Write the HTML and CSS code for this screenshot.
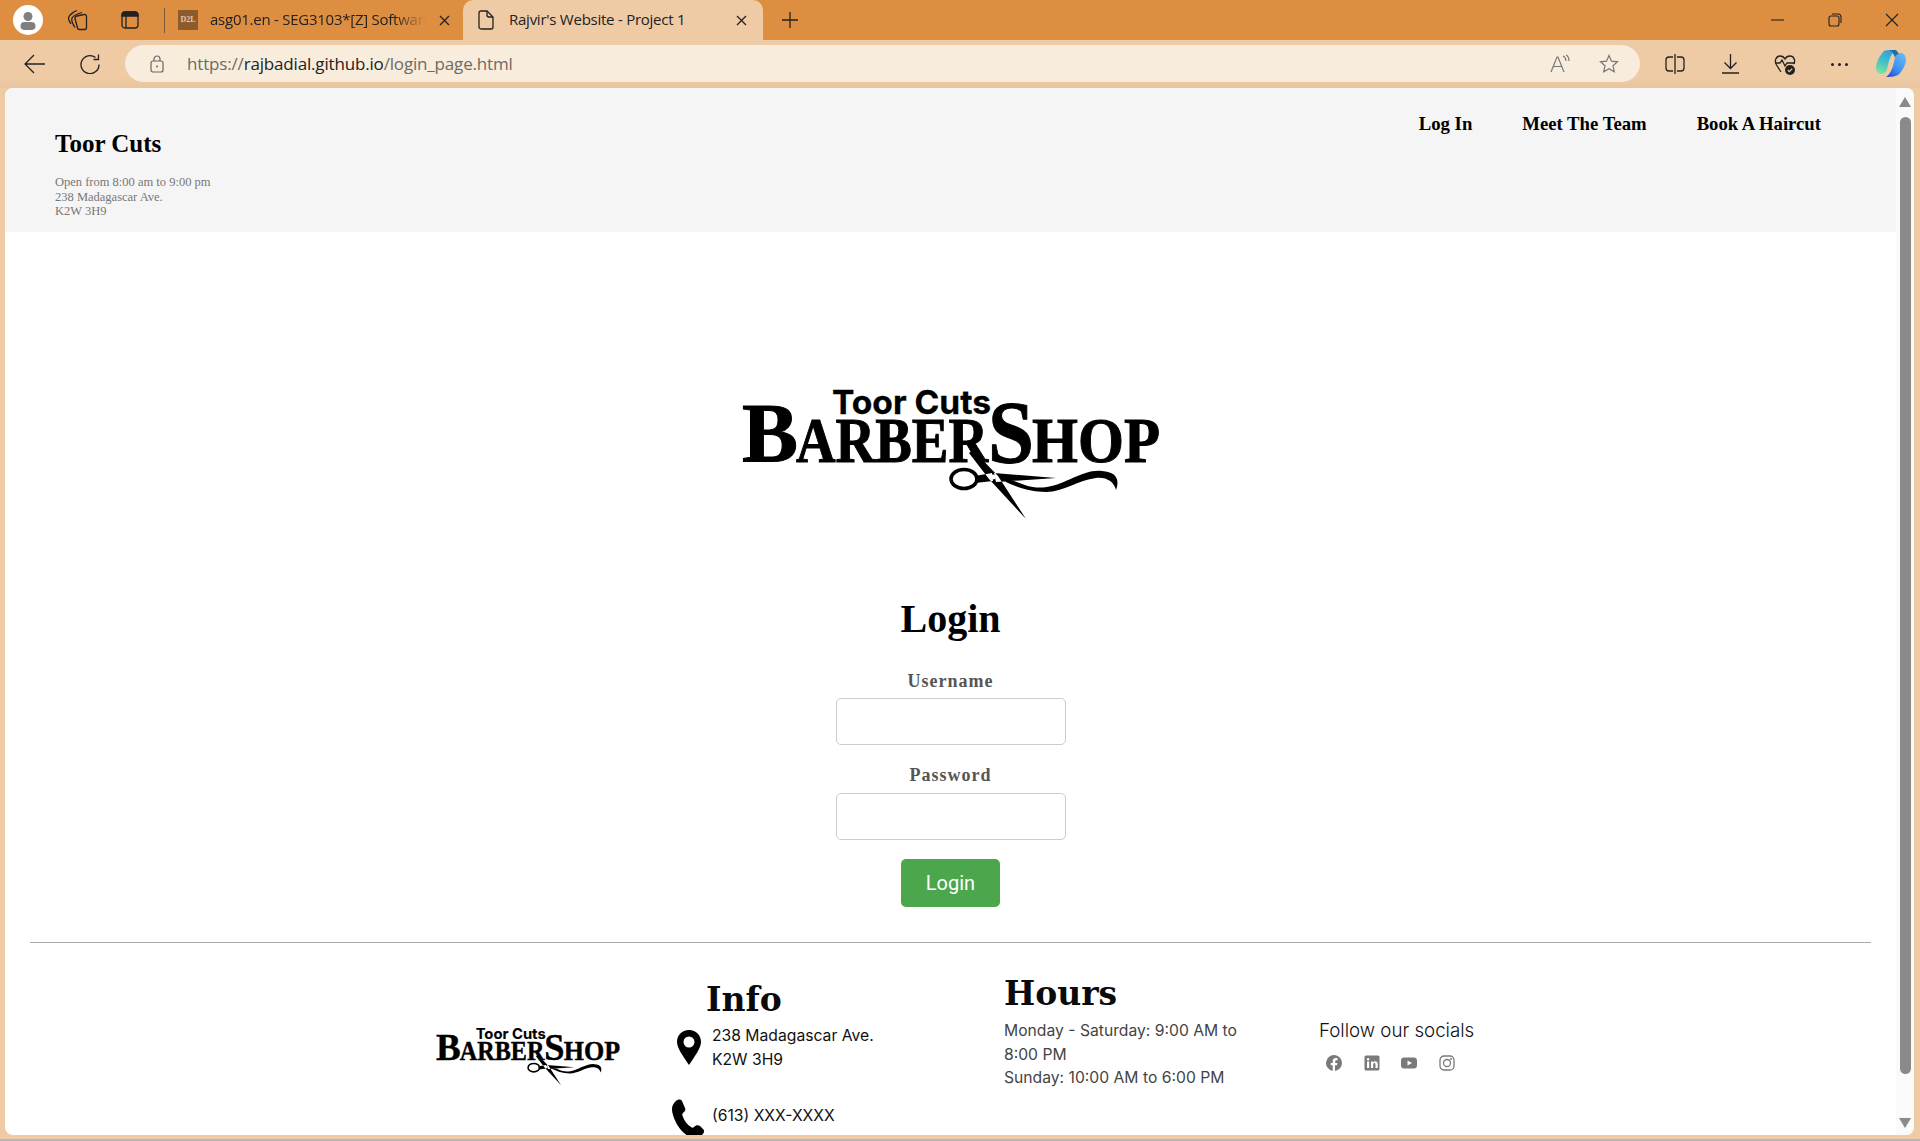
FILE: index.html
```html
<!DOCTYPE html>
<html lang="en">
<head>
<meta charset="utf-8">
<title>Rajvir's Website - Project 1</title>
<link rel="stylesheet" href="styles.css">
</head>
<body>
<div class="browser">
  <div class="tabstrip">
    <div class="profile"><svg viewBox="0 0 30 30"><circle cx="15" cy="15" r="15" fill="#fff"/><circle cx="15" cy="11.500" r="4.500" fill="#808080"/><rect x="7.500" y="17" width="15" height="8" rx="4" fill="#808080"/></svg></div>
    <svg class="strip-ico collections" viewBox="0 0 22 24"><path d="M11 8l7-1.500a2 2 0 0 1 2.500 2v11a2 2 0 0 1-2 2h-5a2 2 0 0 1-2-1.500L9 10.500A2 2 0 0 1 11 8z"/><path d="M5 16c-2-3-3-6-2-7.500 1-2 5-5 8-6"/><path d="M9 19.500c-2-3-4-7-3-9.500 1-2 5-4 10-5.500"/></svg>
    <svg class="strip-ico layout" viewBox="0 0 18 18"><rect x="1" y="1" width="16" height="16" rx="3"/><path d="M1 5h16V4a3 3 0 0 0-3-3H4a3 3 0 0 0-3 3z" fill="#222"/><path d="M5 5v12"/></svg>
    <div class="strip-sep"></div>
    <div class="tab">
      <div class="favicon">D2L</div>
      <span class="tab-title tab-fade">asg01.en - SEG3103*[Z] Software</span>
      <svg class="tab-close" viewBox="0 0 11 11"><path d="M1 1l9 9M10 1l-9 9"/></svg>
    </div>
    <div class="tab tab-active">
      <svg class="page-ico" viewBox="0 0 16 20"><path d="M1 3a2 2 0 0 1 2-2h6l6 6v10a2 2 0 0 1-2 2H3a2 2 0 0 1-2-2z"/><path d="M9 1v4a2 2 0 0 0 2 2h4"/></svg>
      <span class="tab-title">Rajvir's Website - Project 1</span>
      <svg class="tab-close" viewBox="0 0 11 11"><path d="M1 1l9 9M10 1l-9 9"/></svg>
    </div>
    <svg class="new-tab" viewBox="0 0 16 16"><path d="M8 0v16M0 8h16"/></svg>
    <div class="window-controls">
      <svg viewBox="0 0 14 14"><path d="M0 7h13"/></svg>
      <svg viewBox="0 0 14 14"><rect x="1" y="3" width="10" height="10" rx="2"/><path d="M4 1h6a3 3 0 0 1 3 3v6"/></svg>
      <svg viewBox="0 0 14 14"><path d="M1 1l12 12M13 1L1 13"/></svg>
    </div>
  </div>
  <div class="toolbar">
    <svg class="tool back" viewBox="0 0 21 20"><path d="M10 1l-9 9 9 9M1 10h20"/></svg>
    <svg class="tool reload" viewBox="0 0 20 20"><path d="M19 10.500A9 9 0 1 1 15.500 3.500"/><path d="M18.500 0.500v5h-5"/></svg>
    <div class="addressbar">
      <svg class="lock" viewBox="0 0 14 18"><rect x="1" y="6" width="12" height="11" rx="2"/><path d="M4 6V4a3 3 0 0 1 6 0v2"/><circle cx="7" cy="11.500" r="1" fill="#666" stroke="none"/></svg>
      <span class="url">https://<b>rajbadial.github.io</b>/login_page.html</span>
      <svg class="addr-ico read" viewBox="0 0 20 20"><path d="M1 18L7 3h1l6 15M3.500 12.500h8"/><path d="M13 2c2 1 3 3 3 5M16 1c2 1 3 4 3 6"/></svg>
      <svg class="addr-ico star" viewBox="0 0 20 20"><path d="M10 1.500l2.500 5.700 6 .6-4.500 4 1.300 6L10 14.700l-5.300 3.100 1.300-6-4.500-4 6-.6z"/></svg>
    </div>
    <svg class="tool split" viewBox="0 0 20 20"><path d="M8 3H4a3 3 0 0 0-3 3v8a3 3 0 0 0 3 3h4M12 3h4a3 3 0 0 1 3 3v8a3 3 0 0 1-3 3h-4M10 0v20"/></svg>
    <svg class="tool download" viewBox="0 0 17 20"><path d="M8.500 0v14M2.500 8.500l6 6 6-6M0 19h17"/></svg>
    <svg class="tool heart" viewBox="0 0 22 22"><path d="M7 19L2.500 12C0 8 2 3 6 3c2 0 4 1 5 3 1-2 3-3 5-3 4 0 6 5 3.500 8"/><path d="M1 10h5l2-3 3 6 2-3h8"/><circle cx="16" cy="17" r="5" fill="#222" stroke="none"/><path d="M13.800 17l1.600 1.600 2.800-3" stroke="#eecaa5"/></svg>
    <div class="more"><i></i><i></i><i></i></div>
    <svg class="copilot" viewBox="0 0 30 30">
      <defs>
        <linearGradient id="cpA" x1="0.600" y1="0" x2="0.300" y2="1"><stop offset="0" stop-color="#2f9fe0"/><stop offset="0.500" stop-color="#45c0c8"/><stop offset="1" stop-color="#7fe39a"/></linearGradient>
        <linearGradient id="cpB" x1="0.800" y1="0.100" x2="0.200" y2="1"><stop offset="0" stop-color="#5cb8f8"/><stop offset="0.600" stop-color="#3f8cf0"/><stop offset="1" stop-color="#2a4fd0"/></linearGradient>
      </defs>
      <path d="M8 2c2-1 5-1 12-1-3 2-5 5-7 11l-2 8c-1 4-3 5-6 5s-5-3-5-7c0-4 4-12 8-16z" fill="url(#cpA)"/>
      <path d="M22 26c-2 1-5 2-12 2 3-2 5-5 7-11l2-8c1-4 3-5 6-5s5 3 5 7c0 4-4 12-8 15z" fill="url(#cpB)"/>
      <path d="M13 1h6c1 0 2 .5 2.500 2L23 5c-2 0-3.500 1-4 4-1-4-3-7-6-8z" fill="#1d6fa5"/>
    </svg>
  </div>
  <div class="viewport">
    <div class="page">
      <header class="site-header">
        <div class="brand">
          <h1>Toor Cuts</h1>
          <p>Open from 8:00 am to 9:00 pm<br>238 Madagascar Ave.<br>K2W 3H9</p>
        </div>
        <nav class="site-nav">
          <a>Log In</a>
          <a>Meet The Team</a>
          <a>Book A Haircut</a>
        </nav>
      </header>
      <main class="login">
        <svg class="logo logo-large" viewBox="0 0 420 135">
          <text class="logo-top" x="90" y="29" textLength="159" lengthAdjust="spacingAndGlyphs">Toor Cuts</text>
          <text class="logo-cap" x="0" y="77">B</text>
          <text class="logo-small" x="54" y="77" textLength="192" lengthAdjust="spacingAndGlyphs">ARBER</text>
          <text class="logo-big" x="246" y="77" textLength="46" lengthAdjust="spacingAndGlyphs">S</text>
          <text class="logo-small" x="290" y="77" textLength="128" lengthAdjust="spacingAndGlyphs">HOP</text>
          <ellipse cx="222" cy="94" rx="13" ry="9.500" fill="none" stroke="#000" stroke-width="3.500"/>
          <path d="M233 91l17-3 1 8-18 2zM252 88l62 5-60 4zM247 94l37 40-28-43-25-26-4 3zM262 93c15 3 24 12 43 9 20-3 36-18 55-16 14 1 18 8 14 19-2-8-9-13-20-12-18 2-32 14-50 14-17 0-30-5-42-11z"/>
          <circle cx="251" cy="92" r="2.500" fill="#fff"/>
        </svg>
        <h2>Login</h2>
        <label class="field-label first-label" for="username">Username</label>
        <input class="field" id="username" type="text">
        <label class="field-label" for="password">Password</label>
        <input class="field" id="password" type="password">
        <button class="submit" type="button">Login</button>
      </main>
      <hr class="rule">
      <footer class="site-footer">
        <svg class="logo logo-small-size" viewBox="0 0 420 135">
          <text class="logo-top" x="90" y="29" textLength="159" lengthAdjust="spacingAndGlyphs">Toor Cuts</text>
          <text class="logo-cap" x="0" y="77">B</text>
          <text class="logo-small" x="54" y="77" textLength="192" lengthAdjust="spacingAndGlyphs">ARBER</text>
          <text class="logo-big" x="246" y="77" textLength="46" lengthAdjust="spacingAndGlyphs">S</text>
          <text class="logo-small" x="290" y="77" textLength="128" lengthAdjust="spacingAndGlyphs">HOP</text>
          <ellipse cx="222" cy="94" rx="13" ry="9.500" fill="none" stroke="#000" stroke-width="3.500"/>
          <path d="M233 91l17-3 1 8-18 2zM252 88l62 5-60 4zM247 94l37 40-28-43-25-26-4 3zM262 93c15 3 24 12 43 9 20-3 36-18 55-16 14 1 18 8 14 19-2-8-9-13-20-12-18 2-32 14-50 14-17 0-30-5-42-11z"/>
          <circle cx="251" cy="92" r="2.500" fill="#fff"/>
        </svg>
        <section class="info">
          <h3>Info</h3>
          <div class="info-row">
            <svg class="pin" viewBox="0 0 24 35"><path fill-rule="evenodd" d="M12 0C5 0 0 5 0 12c0 6 6 14 12 23 6-9 12-17 12-23C24 5 19 0 12 0zm0 6.500a5.500 5.500 0 1 1 0 11 5.500 5.500 0 0 1 0-11z"/></svg>
            <p>238 Madagascar Ave.<br>K2W 3H9</p>
          </div>
          <div class="info-row phone-row">
            <svg class="phone" viewBox="0 0 32 40"><path d="M4 2c2-2 5-2 6 0l3 7c1 2 0 3-2 5-1 1-1 2 0 4 2 5 4 7 8 10 1 1 2 1 3 0 2-2 4-2 6-1l3 3c2 2 1 4-1 6-3 3-8 4-12 2C10 34 4 26 1 16-1 10 0 5 4 2z"/></svg>
            <p>(613) XXX-XXXX</p>
          </div>
        </section>
        <section class="hours">
          <h3>Hours</h3>
          <p>Monday - Saturday: 9:00 AM to 8:00 PM<br>Sunday: 10:00 AM to 6:00 PM</p>
        </section>
        <section class="socials">
          <p>Follow our socials</p>
          <div class="social-icons">
            <svg viewBox="0 0 16 16"><path d="M16 8a8 8 0 1 0-9.300 7.900v-5.600h-2V8h2V6.200c0-2 1.200-3.100 3-3.100.9 0 1.800.2 1.800.2v2h-1c-1 0-1.300.6-1.300 1.200V8h2.200l-.4 2.300H9v5.600A8 8 0 0 0 16 8z"/></svg>
            <svg viewBox="0 0 16 16"><path fill-rule="evenodd" d="M2 0.500h12a1.500 1.500 0 0 1 1.500 1.500v12a1.500 1.500 0 0 1-1.500 1.500H2A1.500 1.500 0 0 1 .5 14V2A1.500 1.500 0 0 1 2 .5zM3 6.500v6.500h2.200V6.500zM4.100 3a1.200 1.200 0 1 0 0 2.500 1.200 1.200 0 0 0 0-2.500zM7 6.500V13h2.200V9.500c0-2 2.300-2 2.300 0V13h2.200V9c0-3.300-3.400-3.300-4.500-1.600V6.500z"/></svg>
            <svg viewBox="0 0 16 16"><path fill-rule="evenodd" d="M3 2.500h10c1.700 0 3 1.300 3 3v5c0 1.700-1.300 3-3 3H3c-1.700 0-3-1.300-3-3v-5c0-1.700 1.300-3 3-3zM6.500 5.500v5L11 8z"/></svg>
            <svg class="outline" viewBox="0 0 16 16"><rect x="1" y="1" width="14" height="14" rx="4"/><circle cx="8" cy="8" r="3.500"/><circle cx="12" cy="4" r="1" fill="#7a7a7a" stroke="none"/></svg>
          </div>
        </section>
      </footer>
    </div>
    <div class="scrollbar">
      <div class="arrow-up"></div>
      <div class="thumb"></div>
      <div class="arrow-down"></div>
    </div>
  </div>
  <div class="bottom-edge"></div>
</div>
</body>
</html>
```
FILE: styles.css
```css
* { box-sizing: border-box; }
html, body { margin: 0; height: 100%; overflow: hidden; }
body { font-family: "Liberation Serif", serif; background: #eecaa5; }
.browser { height: 1141px; display: flex; flex-direction: column; }

/* tab strip */
.tabstrip { height: 40px; flex: none; background: #de8e41; display: flex; align-items: center; padding-left: 13px; position: relative; }
.profile { width: 30px; height: 30px; }
.profile svg { width: 30px; height: 30px; display: block; }
.strip-ico { fill: none; stroke: #222; stroke-width: 1.300; }
.collections { width: 22px; height: 24px; margin-left: 23px; }
.layout { width: 18px; height: 18px; margin-left: 33px; }
.strip-sep { width: 1px; height: 25px; background: #7c5a36; margin-left: 25px; }
.tab { height: 40px; display: flex; align-items: center; width: 298px; padding-left: 13px; border-radius: 10px 10px 0 0; flex: none; }
.tab-active { width: 300px; background: #eecaa5; padding-left: 15px; }
.favicon { width: 20px; height: 20px; background: #8d5a2b; color: #e7c9a6; font: bold 8px/20px "Liberation Serif", serif; text-align: center; flex: none; }
.tab-title { font: 15px/20px "Open Sans", sans-serif; color: #222; white-space: nowrap; letter-spacing: -0.250px; overflow: hidden; margin-top: -2px; }
.favicon + .tab-title { margin-left: 12px; width: 216px; }
.tab-fade { -webkit-mask-image: linear-gradient(90deg, #000 85%, transparent); mask-image: linear-gradient(90deg, #000 85%, transparent); }
.tab-close { width: 11px; height: 11px; fill: none; stroke: #222; stroke-width: 1.300; flex: none; margin-left: 13px; }
.tab-active .tab-close { margin-left: 51px; }
.page-ico { width: 16px; height: 20px; fill: none; stroke: #222; stroke-width: 1.300; flex: none; margin-right: 15px; }
.new-tab { width: 16px; height: 16px; fill: none; stroke: #222; stroke-width: 1.300; margin-left: 19px; }
.window-controls { margin-left: auto; display: flex; gap: 43px; padding-right: 21px; align-items: center; }
.window-controls svg { width: 14px; height: 14px; fill: none; stroke: #222; stroke-width: 1.100; }

/* toolbar */
.toolbar { height: 48px; flex: none; display: flex; align-items: center; background: linear-gradient(#eecaa5 80%, #e9c49d); padding-left: 24px; }
.tool { fill: none; stroke: #222; stroke-width: 1.300; flex: none; }
.back { width: 21px; height: 20px; }
.reload { width: 20px; height: 20px; margin-left: 35px; }
.addressbar { width: 1515px; height: 37px; margin-left: 25px; margin-top: -1px; border-radius: 19px; background: #f8ecdd; display: flex; align-items: center; padding-left: 25px; flex: none; }
.lock { width: 14px; height: 18px; fill: none; stroke: #666; stroke-width: 1.200; flex: none; }
.url { font: 17px/24px "Open Sans", sans-serif; color: #6e6a66; margin-left: 23px; letter-spacing: -0.170px; white-space: nowrap; }
.url b { font-weight: 400; color: #222; }
.addr-ico { width: 20px; height: 20px; fill: none; stroke: #777; stroke-width: 1.200; flex: none; }
.read { margin-left: auto; }
.star { margin-left: 29px; margin-right: 21px; }
.split { width: 20px; height: 20px; margin-left: 25px; }
.download { width: 17px; height: 20px; margin-left: 37px; }
.heart { width: 22px; height: 22px; margin-left: 35px; }
.more { display: flex; gap: 4px; margin-left: 35px; width: 16px; flex: none; }
.more i { width: 3px; height: 3px; border-radius: 50%; background: #222; flex: none; }
.copilot { width: 30px; height: 30px; margin-left: 29px; flex: none; }

/* page */
.viewport { height: 1047px; flex: none; margin: 0 6px 0 5px; background: #fff; border-radius: 8px; display: flex; overflow: hidden; }
.page { flex: 1; min-width: 0; overflow: hidden; }
.scrollbar { width: 18px; flex: none; background: #fafafa; display: flex; flex-direction: column; align-items: center; padding-top: 9px; }
.arrow-up { width: 0; height: 0; border: 6.500px solid transparent; border-top: 0; border-bottom: 10px solid #8a8a8a; }
.thumb { width: 11px; height: 957px; border-radius: 6px; background: #8a8a8a; margin-top: 10px; }
.arrow-down { width: 0; height: 0; border: 6.500px solid transparent; border-bottom: 0; border-top: 10px solid #8a8a8a; margin-top: 44px; }
.bottom-edge { flex: 1; border-bottom: 2px solid #b4b4bc; }

.site-header { height: 144px; background: #f5f5f5; display: flex; justify-content: space-between; padding: 0 75px 0 50px; }
.brand h1 { margin: 41px 0 0; font-size: 25px; line-height: 29px; font-weight: 700; color: #000; }
.brand p { margin: 17px 0 0; font-size: 12.500px; line-height: 14.500px; color: #777; }
.site-nav { display: flex; gap: 50px; padding-top: 25px; }
.site-nav a { font-size: 18.720px; line-height: 21px; font-weight: 700; color: #000; }

.login { display: flex; flex-direction: column; align-items: center; }
.logo { display: block; fill: #000; }
.logo-large { width: 420px; height: 135px; margin: 153px 0 0 3px; }
.logo-top { font: 700 33px "Inter", sans-serif; stroke: #000; stroke-width: 0.300px; }
.logo-cap { font: 700 84px "Liberation Serif", serif; stroke: #000; stroke-width: 1px; }
.logo-big { font: 700 88px "Liberation Serif", serif; stroke: #000; stroke-width: 1px; }
.logo-small { font: 700 64px "Liberation Serif", serif; stroke: #000; stroke-width: 1px; }
.login h2 { margin: 76px 0 0; font-size: 40px; line-height: 46px; font-weight: 700; color: #000; }
.field-label { font-size: 18px; line-height: 21px; font-weight: 700; color: #555; letter-spacing: 1px; margin-top: 20px; }
.first-label { margin-top: 29px; }
.field { width: 230px; height: 47px; border: 1.500px solid #ccc; border-radius: 5px; background: #fff; margin-top: 7px; display: block; }
.first-label + .field { margin-top: 6px; }
.submit { width: 99px; height: 48px; margin-top: 19px; border: 0; border-radius: 5px; background: #4ca64c; color: #fff; font: 20px "Roboto", sans-serif; }

.rule { margin: 35px 25px 0; border: 0; border-top: 1.500px solid #aaa; height: 0; }
.site-footer { display: flex; align-items: flex-start; padding: 1px 0 0 431px; }
.logo-small-size { width: 185px; height: 60px; margin-top: 82px; flex: none; }
.site-footer h3 { margin: 0; font: 700 33px/38px "DejaVu Serif", serif; color: #0a0a0a; }
.site-footer p { margin: 0; font: 15.700px/23.500px "Inter", sans-serif; }
.info { width: 327px; margin-left: 56px; padding-top: 37px; flex: none; }
.info h3 { margin-left: 29px; }
.info-row { display: flex; align-items: flex-start; margin-top: 5px; color: #111; }
.pin { width: 24px; height: 35px; margin-right: 11px; margin-top: 6px; flex: none; fill: #000; }
.phone-row { margin-top: 33px; }
.phone { width: 32px; height: 40px; margin: -5px 8px 0 -5px; flex: none; fill: #000; }
.hours { width: 315px; padding-top: 31px; flex: none; }
.hours p { color: #444; width: 245px; margin-top: 6px; }
.socials { padding-top: 75px; }
.socials p { font: 300 18.720px/24px "Inter", sans-serif; color: #111; }
.social-icons { display: flex; gap: 21.500px; padding: 12px 0 0 7px; }
.social-icons svg { width: 16px; height: 16px; fill: #7a7a7a; flex: none; }
.social-icons .outline { fill: none; stroke: #7a7a7a; stroke-width: 1.300; }
```
